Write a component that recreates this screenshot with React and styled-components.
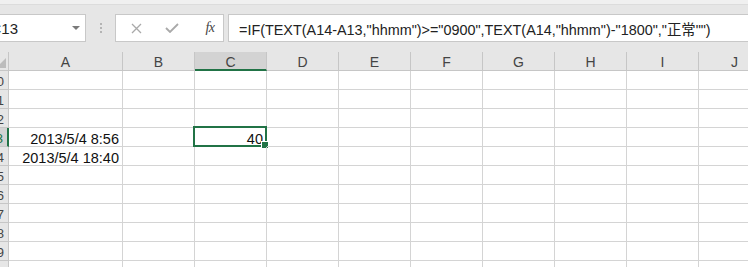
import React from "react";
import styled, { createGlobalStyle } from "styled-components";

const Global = createGlobalStyle`
  html, body { margin: 0; padding: 0; background: #ffffff; overflow: hidden; }
  body { width: 748px; height: 267px; font-family: "Liberation Sans", "Noto Sans CJK SC", sans-serif; }
  * { box-sizing: border-box; }
`;

const Page = styled.div`
  width: 748px;
  height: 267px;
  overflow: hidden;
  background: #ffffff;
`;

const TopStrip = styled.div`
  height: 5px;
  background: #f0f0f0;
  border-bottom: 1px solid #dcdcdc;
`;

const Toolbar = styled.div`
  display: flex;
  align-items: flex-start;
  height: 47px;
  padding-top: 9px;
  background: #e6e6e6;
`;

const NameBox = styled.div`
  position: relative;
  display: flex;
  align-items: center;
  margin-left: -20px;
  width: 106px;
  height: 28px;
  padding-left: 9.5px;
  padding-top: 1px;
  background: #ffffff;
  border: 1px solid #c8c8c8;
  font-size: 15px;
  color: #222;
`;

const DropArrow = styled.span`
  position: absolute;
  right: 5px;
  top: 11px;
  width: 0;
  height: 0;
  border-left: 4px solid transparent;
  border-right: 4px solid transparent;
  border-top: 4px solid #7a7a7a;
`;

const Dots = styled.div`
  display: flex;
  flex-direction: column;
  gap: 2px;
  margin: 9px 13px 0 14px;
  span {
    width: 2px;
    height: 2px;
    background: #b4b4b4;
  }
`;

const IconBox = styled.div`
  display: flex;
  align-items: center;
  width: 109px;
  height: 28px;
  padding-left: 14px;
  background: #ffffff;
  border: 1px solid #c8c8c8;
`;

const IconSlot = styled.div`
  display: flex;
  align-items: center;
  justify-content: center;
  width: ${(p) => p.$w}px;
  color: ${(p) => p.$color};
`;

const Fx = styled.span`
  font-family: "Liberation Serif", serif;
  font-style: italic;
  font-size: 14px;
  color: #444;
  letter-spacing: -0.5px;
`;

const FormulaInput = styled.div`
  display: flex;
  align-items: center;
  margin-left: 4px;
  flex: 1;
  height: 28px;
  padding-left: 10px;
  padding-top: 1px;
  background: #ffffff;
  border: 1px solid #c8c8c8;
  border-right: none;
  font-size: 14.4px;
  color: #222;
  white-space: nowrap;
  overflow: hidden;
`;

const Sheet = styled.div`
  overflow: hidden;
  width: 748px;
`;

const Grid = styled.div`
  display: grid;
  grid-template-columns: 30px 114px repeat(9, 72px);
  grid-auto-rows: 19px;
  margin-left: -21px;
  width: max-content;
`;

const Corner = styled.div`
  position: relative;
  background: #e6e6e6;
  border-right: 1px solid #c6c6c6;
  border-bottom: 1px solid #c6c6c6;
  &::after {
    content: "";
    position: absolute;
    right: 2px;
    bottom: 2px;
    width: 0;
    height: 0;
    border-left: 10px solid transparent;
    border-bottom: 10px solid #bcbcbc;
  }
`;

const ColHead = styled.div`
  display: flex;
  align-items: center;
  justify-content: center;
  background: ${(p) => (p.$active ? "#d3d3d3" : "#e6e6e6")};
  border-right: 1px solid #c6c6c6;
  border-bottom: ${(p) => (p.$active ? "2px solid #217346" : "1px solid #c6c6c6")};
  font-size: 14px;
  color: #444;
  padding-top: ${(p) => (p.$active ? "3px" : "2px")};
`;

const RowHead = styled.div`
  display: flex;
  align-items: center;
  justify-content: flex-end;
  padding-right: 4px;
  padding-top: 2px;
  background: ${(p) => (p.$active ? "#d3d3d3" : "#e6e6e6")};
  border-right: ${(p) => (p.$active ? "2px solid #217346" : "1px solid #c6c6c6")};
  border-bottom: 1px solid #c6c6c6;
  font-size: 13px;
  color: ${(p) => (p.$active ? "#217346" : "#444")};
`;

const Cell = styled.div`
  position: relative;
  display: flex;
  align-items: center;
  justify-content: flex-end;
  padding-right: 3px;
  padding-top: 4px;
  border-right: 1px solid #d4d4d4;
  border-bottom: 1px solid #d4d4d4;
  font-size: 14.5px;
  color: #111;
  white-space: nowrap;
`;

const Selection = styled.div`
  position: absolute;
  left: -2px;
  top: -2px;
  right: -1px;
  bottom: -1px;
  border: 2px solid #217346;
  pointer-events: none;
  &::after {
    content: "";
    position: absolute;
    right: -4px;
    bottom: -4px;
    width: 6px;
    height: 6px;
    background: #217346;
    border: 1px solid #ffffff;
  }
`;

const columns = ["A", "B", "C", "D", "E", "F", "G", "H", "I", "J"];
const rows = [10, 11, 12, 13, 14, 15, 16, 17, 18, 19, 20];
const data = {
  A13: "2013/5/4 8:56",
  A14: "2013/5/4 18:40",
  C13: "40",
};

const XIcon = () => (
  <svg width="11" height="11" viewBox="0 0 11 11">
    <path d="M1 1 L10 10 M10 1 L1 10" stroke="currentColor" strokeWidth="1.3" fill="none" />
  </svg>
);

const CheckIcon = () => (
  <svg width="14" height="10" viewBox="0 0 14 10">
    <path d="M1 5 L5 9 L13 1" stroke="currentColor" strokeWidth="1.8" fill="none" />
  </svg>
);

export default function App() {
  return (
    <Page>
      <Global />
      <TopStrip />
      <Toolbar>
        <NameBox>
          C13
          <DropArrow />
        </NameBox>
        <Dots>
          <span />
          <span />
          <span />
        </Dots>
        <IconBox>
          <IconSlot $w={12} $color="#a9a9a9">
            <XIcon />
          </IconSlot>
          <IconSlot $w={59} $color="#a9a9a9">
            <CheckIcon />
          </IconSlot>
          <IconSlot $w={18} $color="#444">
            <Fx>fx</Fx>
          </IconSlot>
        </IconBox>
        <FormulaInput>
          =IF(TEXT(A14-A13,"hhmm")&gt;="0900",TEXT(A14,"hhmm")-"1800","正常"")
        </FormulaInput>
      </Toolbar>
      <Sheet>
        <Grid>
          <Corner />
          {columns.map((c) => (
            <ColHead key={c} $active={c === "C"}>
              {c}
            </ColHead>
          ))}
          {rows.map((r) => (
            <React.Fragment key={r}>
              <RowHead $active={r === 13}>{r}</RowHead>
              {columns.map((c) => (
                <Cell key={c + r}>
                  {data[c + r]}
                  {c === "C" && r === 13 && <Selection />}
                </Cell>
              ))}
            </React.Fragment>
          ))}
        </Grid>
      </Sheet>
    </Page>
  );
}
